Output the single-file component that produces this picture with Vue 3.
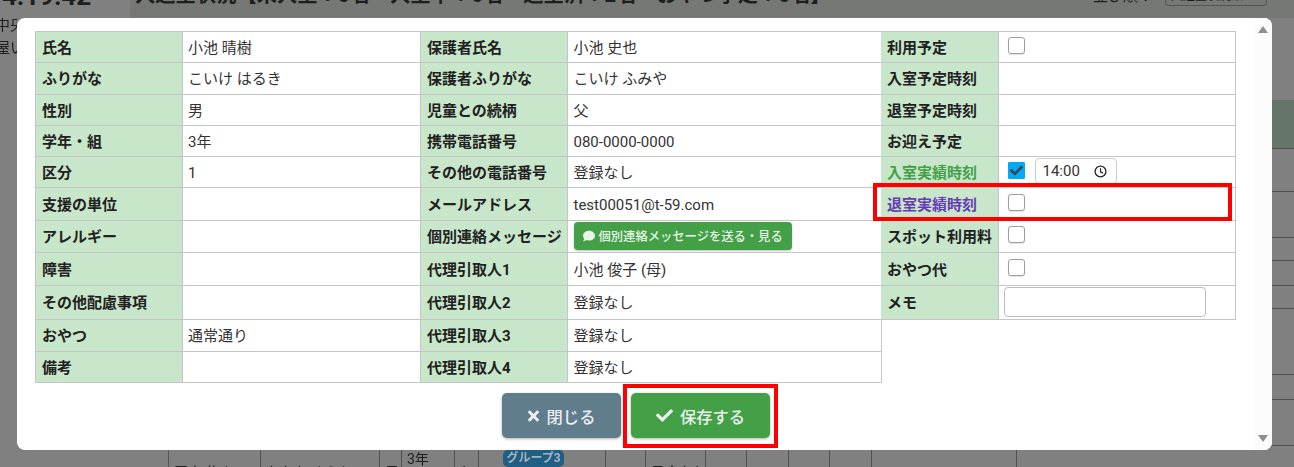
<script setup>
const heights = [31, 32, 31, 31, 31, 33, 32, 33, 34, 32, 31]

const col1 = [
  ['氏名', '小池 晴樹'], ['ふりがな', 'こいけ はるき'], ['性別', '男'], ['学年・組', '3年'], ['区分', '1'],
  ['支援の単位', ''], ['アレルギー', ''], ['障害', ''], ['その他配慮事項', ''], ['おやつ', '通常通り'], ['備考', '']
]
const col2 = [
  ['保護者氏名', '小池 史也'], ['保護者ふりがな', 'こいけ ふみや'], ['児童との続柄', '父'], ['携帯電話番号', '080-0000-0000'],
  ['その他の電話番号', '登録なし'], ['メールアドレス', 'test00051@t-59.com'], ['個別連絡メッセージ', '', 'msg'],
  ['代理引取人1', '小池 俊子 (母)'], ['代理引取人2', '登録なし'], ['代理引取人3', '登録なし'], ['代理引取人4', '登録なし']
]
const col3 = [
  { label: '利用予定', kind: 'check' }, { label: '入室予定時刻' }, { label: '退室予定時刻' }, { label: 'お迎え予定' },
  { label: '入室実績時刻', kind: 'time', tone: 'in' }, { label: '退室実績時刻', kind: 'check', tone: 'out' },
  { label: 'スポット利用料', kind: 'check' }, { label: 'おやつ代', kind: 'check' }, { label: 'メモ', kind: 'memo' }
]
const sideRows = [
  { h: 82 }, { h: 49, green: true }, { h: 43 }, { h: 46 }, { h: 23 }, { h: 25 }, { h: 23 }, { h: 66 }, { h: 25 }, { h: 46 }
]
const bottomCells = [
  { w: 169, t: '' }, { w: 92, t: '田中 悠人', low: true }, { w: 119, t: 'たなか ゆうと', low: true }, { w: 22, t: '男', low: true },
  { w: 53, t: '3年' }, { w: 24, t: '1', low: true }, { w: 127, badge: 'グループ3' }, { w: 40, t: '' }, { w: 60, t: '予定なし', low: true },
  { w: 41, t: '' }, { w: 42, t: '' }, { w: 41, t: '' }, { w: 42, t: '' }, { w: 145, t: '' }
]
</script>

<template>
  <div class="page">
    <div class="under">
      <div class="head">
        <div class="clock">14:19:42</div>
        <div class="title">入退室状況【未入室：6名　入室中：6名　退室済：2名　おやつ予定：6名】</div>
        <div class="sort">並び順：</div>
        <div class="select">入退室状況順</div>
      </div>
      <div class="mid">
        <div class="notes">
          <div>中央</div>
          <div>屋い</div>
        </div>
        <div class="side">
          <div v-for="(r, i) in sideRows" :key="i" class="side-row" :class="{ green: r.green, plain: i === 0 }" :style="{ height: r.h + 'px' }"></div>
        </div>
      </div>
      <div class="bottom">
        <div v-for="(c, i) in bottomCells" :key="i" class="bcell" :class="{ low: c.low }" :style="{ width: c.w + 'px' }">
          <span v-if="c.badge" class="badge">{{ c.badge }}</span>
          <template v-else>{{ c.t }}</template>
        </div>
      </div>
    </div>

    <div class="modal">
      <div class="tables">
        <table class="info t1">
          <tbody>
            <tr v-for="(r, i) in col1" :key="i" :style="{ height: heights[i] + 'px' }">
              <th>{{ r[0] }}</th>
              <td>{{ r[1] }}</td>
            </tr>
          </tbody>
        </table>
        <table class="info t2">
          <tbody>
            <tr v-for="(r, i) in col2" :key="i" :style="{ height: heights[i] + 'px' }">
              <th>{{ r[0] }}</th>
              <td>
                <button v-if="r[2] === 'msg'" class="msg-btn" type="button">
                  <svg class="ic-msg" viewBox="0 0 512 512"><path fill="currentColor" d="M256 32C114.6 32 0 125.1 0 240c0 49.6 21.4 95 57 130.7C44.5 421.1 2.7 466 2.2 466.5c-2.2 2.3-2.8 5.7-1.5 8.7S4.8 480 8 480c66.3 0 116-31.8 140.6-51.4 32.7 12.3 69 19.4 107.4 19.4 141.4 0 256-93.1 256-208S397.4 32 256 32z"/></svg>
                  個別連絡メッセージを送る・見る
                </button>
                <template v-else>{{ r[1] }}</template>
              </td>
            </tr>
          </tbody>
        </table>
        <table class="info t3">
          <tbody>
            <tr v-for="(r, i) in col3" :key="i" :style="{ height: heights[i] + 'px' }">
              <th :class="r.tone">{{ r.label }}</th>
              <td>
                <span v-if="r.kind === 'check'" class="cb"></span>
                <div v-else-if="r.kind === 'time'" class="time-wrap">
                  <span class="cb on">
                    <svg viewBox="0 0 512 512"><path fill="#37474f" d="M173.898 439.404l-166.4-166.4c-9.997-9.997-9.997-26.206 0-36.204l36.203-36.204c9.997-9.998 26.207-9.998 36.204 0L192 312.69 432.095 72.596c9.997-9.997 26.207-9.997 36.204 0l36.203 36.204c9.997 9.997 9.997 26.206 0 36.204l-294.4 294.401c-9.998 9.997-26.207 9.997-36.204-.001z"/></svg>
                  </span>
                  <div class="time">
                    <span>14:00</span>
                    <svg class="ic-clock" viewBox="0 0 24 24"><circle cx="12" cy="12" r="10" fill="none" stroke="#222" stroke-width="2.4"/><path d="M12 6V12.6L16.5 15" fill="none" stroke="#222" stroke-width="2.2"/></svg>
                  </div>
                </div>
                <input v-else-if="r.kind === 'memo'" class="memo" type="text" />
              </td>
            </tr>
          </tbody>
        </table>
      </div>

      <div class="actions">
        <button class="btn close" type="button">
          <svg class="ic-x" viewBox="0 0 352 512"><path fill="currentColor" d="M242.72 256l100.07-100.07c12.28-12.28 12.28-32.19 0-44.48l-22.24-22.24c-12.28-12.28-32.19-12.28-44.48 0L176 189.28 75.93 89.21c-12.28-12.28-32.19-12.28-44.48 0L9.21 111.45c-12.28 12.28-12.28 32.19 0 44.48L109.28 256 9.21 356.07c-12.28 12.28-12.28 32.19 0 44.48l22.24 22.24c12.28 12.28 32.2 12.28 44.48 0L176 322.72l100.07 100.07c12.28 12.28 32.2 12.28 44.48 0l22.24-22.24c12.28-12.28 12.28-32.19 0-44.48L242.72 256z"/></svg>
          閉じる
        </button>
        <button class="btn save" type="button">
          <svg class="ic-check" viewBox="0 0 512 512"><path fill="currentColor" d="M173.898 439.404l-166.4-166.4c-9.997-9.997-9.997-26.206 0-36.204l36.203-36.204c9.997-9.998 26.207-9.998 36.204 0L192 312.69 432.095 72.596c9.997-9.997 26.207-9.997 36.204 0l36.203 36.204c9.997 9.997 9.997 26.206 0 36.204l-294.4 294.401c-9.998 9.997-26.207 9.997-36.204-.001z"/></svg>
          保存する
        </button>
      </div>

      <div class="scrollbar">
        <svg viewBox="0 0 10 7"><path d="M5 0L10 7H0z" fill="#8e8e8e"/></svg>
        <svg viewBox="0 0 10 7"><path d="M0 0H10L5 7z" fill="#8e8e8e"/></svg>
      </div>
    </div>

    <div class="mark mark-row"></div>
    <div class="mark mark-save"></div>
  </div>
</template>

<style scoped>
.page {
  position: relative;
  width: 1294px;
  height: 467px;
  overflow: hidden;
  background: #808080;
  font-family: Roboto, "Noto Sans CJK JP", sans-serif;
  color: #222;
}
.under {
  display: flex;
  flex-direction: column;
  height: 467px;
  filter: blur(0.4px);
}
.head {
  height: 18px;
  flex: none;
  display: flex;
  align-items: flex-end;
  background: linear-gradient(to right, #808080 130px, #767876 130px);
  overflow: hidden;
  color: #1e1e1e;
  font-weight: 700;
  white-space: nowrap;
}
.clock {
  width: 135px;
  margin-left: -13px;
  flex: none;
  font-size: 26px;
  line-height: 28px;
  margin-bottom: 8px;
  box-sizing: border-box;
}
.title {
  width: 958px;
  flex: none;
  font-size: 20.3px;
  line-height: 28px;
  margin-bottom: 9px;
  margin-left: 13px;
  overflow: hidden;
}
.sort {
  font-size: 15px;
  line-height: 20px;
  width: 72px;
  flex: none;
  font-weight: 400;
  margin-bottom: 12px;
}
.select {
  width: 102px;
  flex: none;
  height: 18px;
  border: 1px solid #555;
  border-radius: 3px;
  box-sizing: border-box;
  font-size: 12px;
  font-weight: 400;
  padding-left: 5px;
  line-height: 14px;
  margin-bottom: 12px;
}
.mid {
  height: 432px;
  flex: none;
  display: flex;
  justify-content: space-between;
}
.notes {
  width: 17px;
  overflow: hidden;
  font-size: 15px;
  line-height: 23px;
  white-space: nowrap;
  color: #1e1e1e;
}
.notes div {
  margin-left: -5px;
  position: relative;
  top: -4px;
}
.side {
  width: 22px;
}
.side-row {
  box-sizing: border-box;
  border-bottom: 1px solid #505050;
}
.side-row.plain {
  border-bottom: 0;
}
.side-row.green {
  background: #66756a;
}
.bottom {
  flex: 1;
  display: flex;
  overflow: hidden;
  color: #1e1e1e;
  font-size: 14px;
}
.bcell {
  flex: none;
  box-sizing: border-box;
  border-right: 1px solid #505050;
  padding-left: 5px;
  line-height: 18px;
  white-space: nowrap;
  overflow: hidden;
}
.bcell:first-child {
  border-right: 1px solid #555;
}
.bcell.low {
  padding-top: 13px;
}
.badge {
  display: block;
  width: 61px;
  height: 17px;
  margin: 0 0 0 19px;
  background: #1f5f85;
  color: #a8b4ba;
  border-radius: 5px;
  font-size: 12px;
  font-weight: 700;
  line-height: 16px;
  text-align: center;
}

.modal {
  position: absolute;
  left: 17px;
  top: 18px;
  width: 1255px;
  height: 432px;
  box-sizing: border-box;
  padding: 13px 0 0 18px;
  background: #fff;
  border-radius: 8px;
}
.tables {
  display: flex;
  align-items: flex-start;
}
.info {
  flex: none;
  border-collapse: collapse;
  table-layout: fixed;
  font-size: 15px;
  line-height: 20px;
  color: #333;
}
.info th,
.info td {
  border: 1px solid #c6c6c6;
  padding: 1px 0 0 6px;
  box-sizing: border-box;
  white-space: nowrap;
}
.info th {
  background: #c8e6c9;
  color: #212121;
  font-weight: 700;
  text-align: left;
}
.t1 {
  width: 386px;
}
.t1 th {
  width: 147px;
}
.t1 td {
  padding-left: 5px;
}
.t2 {
  width: 461px;
}
.t2 th {
  width: 146px;
  border-left: 0;
}
.t2 td {
  padding-left: 6px;
}
.t3 {
  width: 355px;
  margin-left: -1px;
}
.t3 th {
  width: 117px;
  border-left: 0;
}
.t3 td {
  padding-left: 9px;
}
th.in {
  color: #43a047;
}
th.out {
  color: #673ab7;
}
.cb {
  display: block;
  position: relative;
  width: 17px;
  height: 17px;
  box-sizing: border-box;
  border: 1px solid #9e9e9e;
  border-radius: 3px;
  background: #fff;
  margin-top: -5px;
  box-shadow: 0 1px 1px rgba(0, 0, 0, 0.12);
}
.cb.on {
  background: #03a9f4;
  border-color: #03a9f4;
  margin-top: -1px;
  border-radius: 1px;
  box-shadow: none;
  display: flex;
  align-items: center;
  justify-content: center;
}
.cb.on svg {
  width: 13px;
  height: 13px;
}
.time-wrap {
  display: flex;
  align-items: center;
  gap: 10px;
  margin-top: -3px;
}
.time {
  width: 82px;
  height: 26px;
  box-sizing: border-box;
  border: 1px solid #ccc;
  border-radius: 4px;
  background: #fff;
  display: flex;
  align-items: center;
  justify-content: space-between;
  padding: 0 9px 0 7px;
  color: #333;
  font-size: 15px;
}
.ic-clock {
  width: 13px;
  height: 13px;
}
.memo {
  display: block;
  width: 202px;
  height: 30px;
  box-sizing: border-box;
  margin: -3px 0 0 -4px;
  border: 1px solid #bdbdbd;
  border-radius: 4px;
  background: #fff;
  outline: none;
}
.msg-btn {
  display: flex;
  align-items: center;
  width: 218px;
  height: 28px;
  padding: 0 0 0 9px;
  margin-top: -3px;
  border: 0;
  border-radius: 4px;
  background: #43a047;
  color: #e8f5e9;
  font: 500 12.3px Roboto, "Noto Sans CJK JP", sans-serif;
  white-space: nowrap;
  box-shadow: 0 1px 2px rgba(0, 0, 0, 0.25);
}
.ic-msg {
  width: 12px;
  height: 12px;
  margin-right: 4px;
}
.actions {
  display: flex;
  gap: 10px;
  margin: 10px 0 0 467px;
}
.btn {
  display: flex;
  align-items: center;
  justify-content: center;
  height: 45px;
  border: 0;
  border-radius: 5px;
  color: #eceff1;
  font: 500 16.3px Roboto, "Noto Sans CJK JP", sans-serif;
  box-shadow: 0 1px 3px rgba(0, 0, 0, 0.3);
}
.close {
  width: 119px;
  background: #607d8b;
}
.save {
  width: 139px;
  background: #43a047;
}
.ic-x {
  width: 11px;
  height: 16px;
  margin-right: 8px;
}
.ic-check {
  width: 17px;
  height: 17px;
  margin-right: 7px;
}
.scrollbar {
  position: absolute;
  right: 0;
  top: 0;
  bottom: 0;
  width: 18px;
  box-sizing: border-box;
  padding: 8px 0 8px 0;
  background: #fcfcfc;
  border-radius: 0 8px 8px 0;
  display: flex;
  flex-direction: column;
  justify-content: space-between;
  align-items: center;
}
.scrollbar svg {
  width: 10px;
  height: 7px;
}
.mark {
  position: absolute;
  box-sizing: border-box;
  border: 4px solid #f00;
}
.mark-row {
  left: 873px;
  top: 183px;
  width: 359px;
  height: 38px;
}
.mark-save {
  left: 623px;
  top: 384px;
  width: 155px;
  height: 64px;
}
</style>
